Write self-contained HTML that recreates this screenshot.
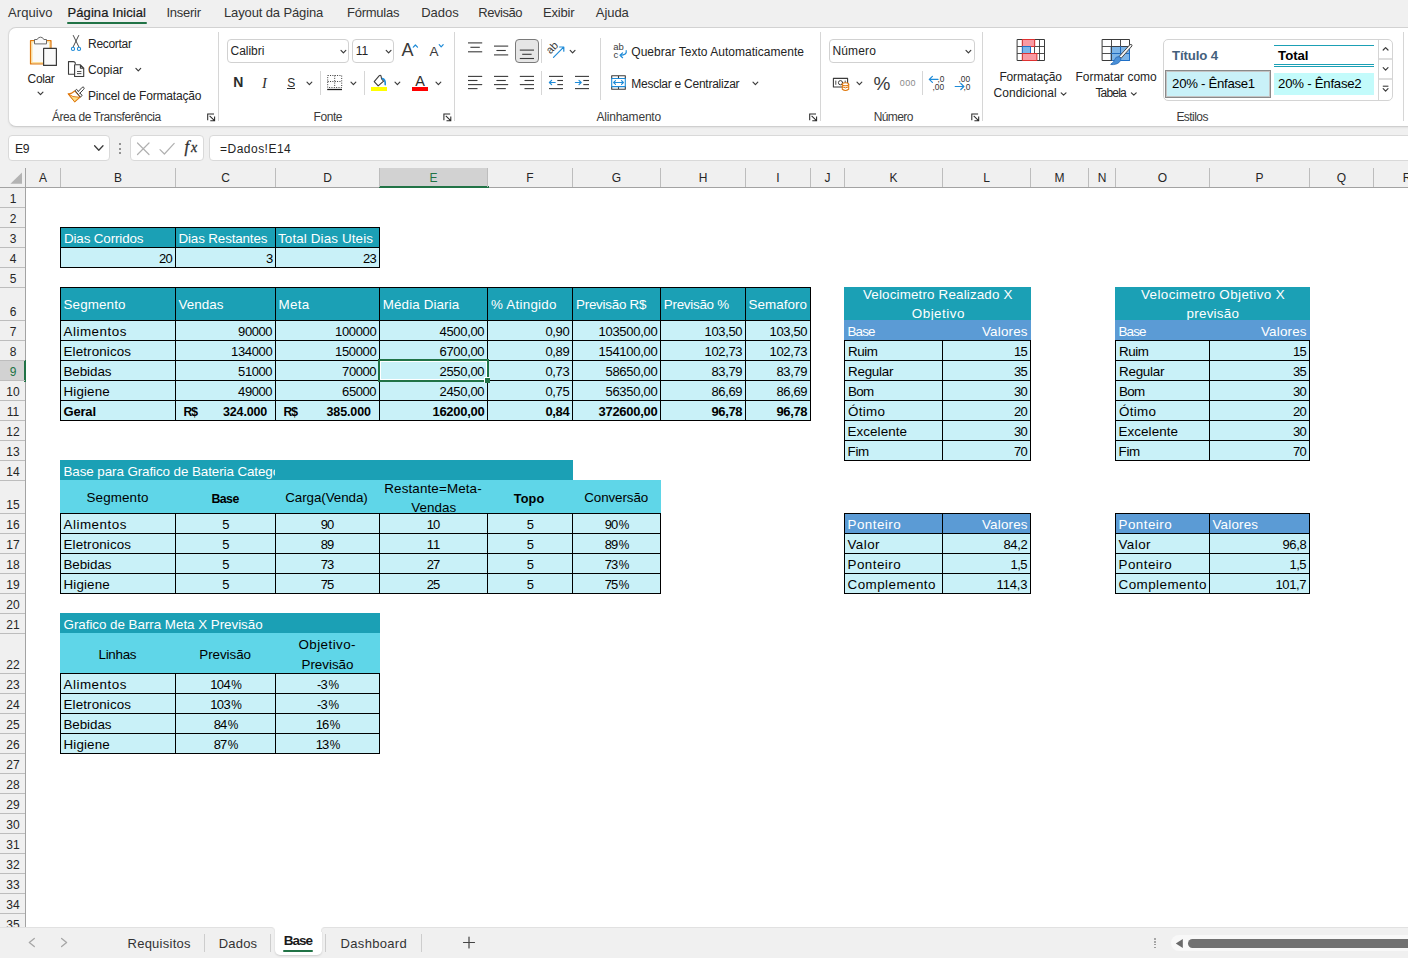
<!DOCTYPE html>
<html><head><meta charset="utf-8"><title>Excel</title><style>
html,body{margin:0;padding:0}
html{overflow:hidden;width:1408px;height:958px}
body{width:1408px;height:958px;overflow:hidden;position:relative;background:#f0f0f0;font-family:"Liberation Sans",sans-serif;color:#242424}
.t{position:absolute;white-space:nowrap;line-height:20px;height:20px}
.r{position:absolute}
svg{position:absolute;left:0;top:0;overflow:visible}
</style></head><body>
<div class="t" style="top:3.30px;font-size:13px;letter-spacing:0.072px;color:#333333;left:8.00px;">Arquivo</div>
<div class="t" style="top:3.30px;font-size:13px;letter-spacing:-0.273px;color:#333333;left:166.50px;">Inserir</div>
<div class="t" style="top:3.30px;font-size:13px;letter-spacing:-0.131px;color:#333333;left:224.00px;">Layout da Página</div>
<div class="t" style="top:3.30px;font-size:13px;letter-spacing:-0.244px;color:#333333;left:347.00px;">Fórmulas</div>
<div class="t" style="top:3.30px;font-size:13px;letter-spacing:0.008px;color:#333333;left:421.20px;">Dados</div>
<div class="t" style="top:3.30px;font-size:13px;letter-spacing:-0.449px;color:#333333;left:478.20px;">Revisão</div>
<div class="t" style="top:3.30px;font-size:13px;letter-spacing:-0.200px;color:#333333;left:543.00px;">Exibir</div>
<div class="t" style="top:3.30px;font-size:13px;letter-spacing:-0.070px;color:#333333;left:595.80px;">Ajuda</div>
<div class="t" style="top:3.30px;font-size:13px;letter-spacing:0.088px;color:#1a1a1a;left:67.50px;-webkit-text-stroke:0.22px #1a1a1a;">Página Inicial</div>
<div class="r" style="left:67px;top:22px;width:80px;height:2px;background:#217346;border-radius:1px;"></div>
<div class="r" style="left:8px;top:27px;width:1420px;height:98px;background:#ffffff;border:1px solid #dadada;border-top-color:#d2d2d2;border-bottom-color:#cfcfcf;border-radius:8px;box-shadow:0 1px 2px rgba(0,0,0,0.06)"></div>
<div class="r" style="left:218px;top:32px;width:1px;height:89px;background:#d6d6d6;"></div>
<div class="r" style="left:454px;top:32px;width:1px;height:89px;background:#d6d6d6;"></div>
<div class="r" style="left:820px;top:32px;width:1px;height:89px;background:#d6d6d6;"></div>
<div class="r" style="left:982px;top:32px;width:1px;height:89px;background:#d6d6d6;"></div>
<div class="r" style="left:1403px;top:32px;width:1px;height:89px;background:#d6d6d6;"></div>
<div class="r" style="left:320px;top:71px;width:1px;height:24px;background:#d6d6d6;"></div>
<div class="r" style="left:364px;top:71px;width:1px;height:24px;background:#d6d6d6;"></div>
<div class="r" style="left:541px;top:39px;width:1px;height:24px;background:#d6d6d6;"></div>
<div class="r" style="left:541px;top:71px;width:1px;height:24px;background:#d6d6d6;"></div>
<div class="r" style="left:600px;top:38px;width:1px;height:62px;background:#d6d6d6;"></div>
<div class="r" style="left:922px;top:71px;width:1px;height:24px;background:#d6d6d6;"></div>
<div class="t" style="top:107.44px;font-size:12px;letter-spacing:-0.445px;color:#3b3b3b;left:52.00px;">Área de Transferência</div>
<div class="t" style="top:107.44px;font-size:12px;letter-spacing:-0.415px;color:#3b3b3b;left:313.50px;">Fonte</div>
<div class="t" style="top:107.44px;font-size:12px;letter-spacing:-0.192px;color:#3b3b3b;left:596.40px;">Alinhamento</div>
<div class="t" style="top:107.44px;font-size:12px;letter-spacing:-0.592px;color:#3b3b3b;left:873.70px;">Número</div>
<div class="t" style="top:107.44px;font-size:12px;letter-spacing:-0.540px;color:#3b3b3b;left:1176.40px;">Estilos</div>
<div class="t" style="top:68.64px;font-size:12px;letter-spacing:-0.370px;left:27.60px;">Colar</div>
<div class="t" style="top:34.14px;font-size:12px;letter-spacing:-0.289px;left:88.00px;">Recortar</div>
<div class="t" style="top:60.44px;font-size:12px;letter-spacing:-0.068px;left:88.00px;">Copiar</div>
<div class="t" style="top:86.14px;font-size:12px;letter-spacing:-0.168px;left:88.00px;">Pincel de Formatação</div>
<div class="r" style="left:227px;top:39px;width:122px;height:24px;background:#ffffff;border:1px solid #d1d1d1;border-radius:4px;box-sizing:border-box;"></div>
<div class="r" style="left:352px;top:39px;width:42px;height:24px;background:#ffffff;border:1px solid #d1d1d1;border-radius:4px;box-sizing:border-box;"></div>
<div class="t" style="top:41.14px;font-size:12px;letter-spacing:-0.037px;left:230.60px;">Calibri</div>
<div class="t" style="top:41.14px;font-size:12px;letter-spacing:0.021px;left:355.80px;">11</div>
<div class="t" style="top:40.36px;font-size:18px;color:#3a3a3a;left:401.50px;">A</div>
<div class="t" style="top:41.92px;font-size:13.5px;color:#3a3a3a;left:429.50px;">A</div>
<div class="t" style="top:72.05px;font-size:14px;font-weight:bold;color:#2b2b2b;left:233.20px;">N</div>
<div class="t" style="top:72.58px;font-size:14.5px;font-style:italic;font-family:'Liberation Serif',serif;color:#2b2b2b;left:262.00px;">I</div>
<div class="t" style="top:72.94px;font-size:12px;color:#2b2b2b;left:287.20px;">S</div>
<div class="r" style="left:287px;top:88px;width:8px;height:1px;background:#2b2b2b;"></div>
<div class="t" style="top:71.18px;font-size:14.5px;color:#2b2b2b;left:415.30px;">A</div>
<div class="r" style="left:412px;top:87px;width:16px;height:4px;background:#ff0000;"></div>
<div class="r" style="left:371px;top:87px;width:16px;height:4px;background:#ffff00;"></div>
<div class="t" style="top:42.44px;font-size:12px;letter-spacing:0.029px;left:631.30px;">Quebrar Texto Automaticamente</div>
<div class="t" style="top:74.24px;font-size:12px;letter-spacing:-0.255px;left:631.30px;">Mesclar e Centralizar</div>
<div class="r" style="left:515px;top:39px;width:24px;height:24px;background:#e6e6e6;border:1px solid #7a7a7a;border-radius:4px;box-sizing:border-box;"></div>
<div class="r" style="left:829px;top:39px;width:146px;height:24px;background:#ffffff;border:1px solid #d1d1d1;border-radius:4px;box-sizing:border-box;"></div>
<div class="t" style="top:41.14px;font-size:12px;letter-spacing:0.168px;left:832.40px;">Número</div>
<div class="t" style="top:74.02px;font-size:19px;color:#3a3a3a;left:873.50px;">%</div>
<div class="t" style="top:73.28px;font-size:9px;letter-spacing:0.328px;color:#8a8a8a;left:899.80px;">000</div>
<div class="t" style="top:67.44px;font-size:12px;letter-spacing:-0.158px;left:999.40px;">Formatação</div>
<div class="t" style="top:83.24px;font-size:12px;letter-spacing:0.040px;left:993.50px;">Condicional</div>
<div class="t" style="top:67.44px;font-size:12px;left:1075.40px;">Formatar como</div>
<div class="t" style="top:83.24px;font-size:12px;letter-spacing:-0.800px;left:1095.40px;">Tabela</div>
<div class="r" style="left:1163px;top:39px;width:230px;height:62px;background:#ffffff;border:1px solid #d4d4d4;border-radius:5px;box-sizing:border-box;"></div>
<div class="r" style="left:1378px;top:40px;width:1px;height:60px;background:#d4d4d4;"></div>
<div class="r" style="left:1379px;top:58px;width:13px;height:2px;background:#dedede;"></div>
<div class="r" style="left:1379px;top:78px;width:13px;height:2px;background:#dedede;"></div>
<div class="t" style="top:45.73px;font-size:13.2px;letter-spacing:-0.104px;font-weight:bold;color:#44607c;left:1172.00px;">Título 4</div>
<div class="t" style="top:45.73px;font-size:13.2px;letter-spacing:-0.039px;font-weight:bold;color:#000;left:1278.10px;">Total</div>
<div class="r" style="left:1274px;top:45px;width:100px;height:1px;background:#1ba0b5;"></div>
<div class="r" style="left:1274px;top:64px;width:100px;height:1px;background:#1ba0b5;"></div>
<div class="r" style="left:1274px;top:66px;width:100px;height:1px;background:#1ba0b5;"></div>
<div class="r" style="left:1165px;top:70px;width:106px;height:28px;background:#c9f1f8;border:1px solid #8a8a8a;box-shadow:inset 0 0 0 1px #c4c4c4;box-sizing:border-box;"></div>
<div class="r" style="left:1274px;top:73px;width:100px;height:22px;background:#c3fbfb;"></div>
<div class="t" style="top:73.83px;font-size:13.2px;letter-spacing:-0.283px;color:#000;left:1172.10px;">20% - Ênfase1</div>
<div class="t" style="top:73.83px;font-size:13.2px;letter-spacing:-0.241px;color:#000;left:1278.10px;">20% - Ênfase2</div>
<div class="r" style="left:8px;top:135px;width:102px;height:26px;background:#ffffff;border:1px solid #d9d9d9;border-radius:4px;box-sizing:border-box;"></div>
<div class="r" style="left:130px;top:135px;width:74px;height:26px;background:#ffffff;border:1px solid #d9d9d9;border-radius:4px;box-sizing:border-box;"></div>
<div class="r" style="left:209px;top:135px;width:1230px;height:26px;background:#ffffff;border:1px solid #d9d9d9;border-radius:4px;box-sizing:border-box;"></div>
<div class="t" style="top:138.97px;font-size:12.2px;letter-spacing:-0.450px;left:15.10px;">E9</div>
<div class="t" style="top:139.04px;font-size:12px;letter-spacing:0.488px;left:220.00px;">=Dados!E14</div>
<div class="t" style="top:137.28px;font-size:16.5px;font-style:italic;font-family:'Liberation Serif',serif;color:#2e2e2e;left:184.60px;-webkit-text-stroke:0.3px #2e2e2e;">f</div>
<div class="t" style="top:138.35px;font-size:14px;font-style:italic;font-family:'Liberation Serif',serif;color:#2e2e2e;left:191.00px;-webkit-text-stroke:0.3px #2e2e2e;">x</div>
<div class="r" style="left:119px;top:143.4px;width:2px;height:2px;background:#757575;border-radius:1px;"></div>
<div class="r" style="left:119px;top:147.5px;width:2px;height:2px;background:#757575;border-radius:1px;"></div>
<div class="r" style="left:119px;top:151.6px;width:2px;height:2px;background:#757575;border-radius:1px;"></div>
<svg width="1408" height="168" viewBox="0 0 1408 168" fill="none" stroke-linecap="round" stroke-linejoin="round">
<rect x="30.6" y="40.6" width="20.3" height="23.3" fill="#fafafa" stroke="#e07a10" stroke-width="1.4"/>
<rect x="31.9" y="41.9" width="17.7" height="20.7" fill="none" stroke="#fbdf9a" stroke-width="1.2"/>
<path d="M34.5 43.5 V39.5 H37.2 A3.5 3.5 0 0 1 43.8 39.5 H46.5 V43.5 Z" fill="#fafafa" stroke="#6a6a6a" stroke-width="1"/>
<rect x="43.6" y="48.4" width="12.8" height="17" fill="#fafafa" stroke="#3b3b3b" stroke-width="1.2"/>
<path d="M38.05 92.15 L40.50 94.65 L42.95 92.15" stroke="#3b3b3b" stroke-width="1.2"/>
<path d="M73.3 35.5 L78.9 47 M78.7 35.5 L73.1 47" stroke="#4a4a4a" stroke-width="1"/>
<circle cx="73" cy="48.9" r="1.6" stroke="#1e8bd8" stroke-width="1.1"/><circle cx="79" cy="48.9" r="1.6" stroke="#1e8bd8" stroke-width="1.1"/>
<path d="M74 74.2 H68.5 V61.6 H73.2 Q75.3 61.6 75.3 63.6" stroke="#3b3b3b" stroke-width="1.1"/>
<path d="M74.6 64.8 H80.4 L83.7 68.1 V76.5 H74.6 Z M80.4 64.8 V68.1 H83.7" stroke="#3b3b3b" stroke-width="1.1" fill="#fafafa"/>
<path d="M77.00 71.50 H81.40" stroke="#3b3b3b" stroke-width="0.9" stroke-linecap="butt"/>
<path d="M77.00 73.60 H81.40" stroke="#3b3b3b" stroke-width="0.9" stroke-linecap="butt"/>
<path d="M135.90 68.40 L138.30 70.80 L140.70 68.40" stroke="#3b3b3b" stroke-width="1.2"/>
<path d="M68.3 94 Q72 93.6 74.7 91 L80.2 97 L74.9 101.6 Z" fill="#fdfdfd" stroke="#e07a10" stroke-width="1.1"/>
<path d="M68.3 94 Q72 97.5 79.5 97.3 L74.9 101.6 Z" fill="#fbe08a" stroke="#e07a10" stroke-width="1"/>
<path d="M75.4 90.4 L76.6 89.3 L82.2 95.5 L80.6 96.8 Z" fill="#fff" stroke="#3b3b3b" stroke-width="1"/>
<path d="M78.2 91.6 L82.2 87.3 Q83.3 86.6 84 87.6 Q84.5 88.6 83.6 89.4 L79.8 93.3" fill="#fff" stroke="#3b3b3b" stroke-width="1"/>
<path d="M207.7 120.2 V113.9 H214.0" stroke="#2a2a2a" stroke-width="1.05" stroke-linecap="butt" stroke-linejoin="miter"/>
<path d="M209.6 115.8 L214.5 120.6 M214.6 116.4 V120.7 H210.3" stroke="#2a2a2a" stroke-width="1.05" stroke-linecap="butt" stroke-linejoin="miter"/>
<path d="M341.00 50.40 L343.40 52.80 L345.80 50.40" stroke="#3b3b3b" stroke-width="1.2"/>
<path d="M386.20 50.40 L388.60 52.80 L391.00 50.40" stroke="#3b3b3b" stroke-width="1.2"/>
<path d="M413.3 47.2 L415.4 45 L417.5 47.2" stroke="#1e8bd8" stroke-width="1.2"/>
<path d="M439.2 44.6 L441.2 46.8 L443.2 44.6" stroke="#1e8bd8" stroke-width="1.2"/>
<path d="M307.00 82.20 L309.40 84.60 L311.80 82.20" stroke="#3b3b3b" stroke-width="1.2"/>
<path d="M351.00 82.20 L353.40 84.60 L355.80 82.20" stroke="#3b3b3b" stroke-width="1.2"/>
<path d="M395.00 82.20 L397.40 84.60 L399.80 82.20" stroke="#3b3b3b" stroke-width="1.2"/>
<path d="M436.00 82.20 L438.40 84.60 L440.80 82.20" stroke="#3b3b3b" stroke-width="1.2"/>
<path d="M327.7 75.5 H341.7 V87.5 H327.7 Z M334.7 75.5 V87.5 M327.7 81.5 H341.7" stroke="#3b3b3b" stroke-width="1" stroke-dasharray="1 1.35" stroke-linecap="butt"/>
<path d="M327.20 89.50 H342.00" stroke="#1a1a1a" stroke-width="1.3" stroke-linecap="butt"/>
<path d="M374.2 81.6 L379.3 75.7 Q380.2 74.8 381 75.8 L381.6 79 L383.6 81.2 L378.2 85.9 Z" fill="#fff" stroke="#3b3b3b" stroke-width="1.1"/>
<path d="M382.4 78.6 Q385.6 79.6 385.2 84.6" stroke="#1e8bd8" stroke-width="1.6"/>
<path d="M443.9 120.2 V113.9 H450.2" stroke="#2a2a2a" stroke-width="1.05" stroke-linecap="butt" stroke-linejoin="miter"/>
<path d="M445.8 115.8 L450.7 120.6 M450.8 116.4 V120.7 H446.5" stroke="#2a2a2a" stroke-width="1.05" stroke-linecap="butt" stroke-linejoin="miter"/>
<path d="M468.00 42.90 H482.20" stroke="#3b3b3b" stroke-width="1.1" stroke-linecap="butt"/>
<path d="M470.40 47.30 H479.80" stroke="#3b3b3b" stroke-width="1.1" stroke-linecap="butt"/>
<path d="M468.00 51.80 H482.20" stroke="#3b3b3b" stroke-width="1.1" stroke-linecap="butt"/>
<path d="M494.00 46.10 H508.20" stroke="#3b3b3b" stroke-width="1.1" stroke-linecap="butt"/>
<path d="M496.40 50.50 H505.80" stroke="#3b3b3b" stroke-width="1.1" stroke-linecap="butt"/>
<path d="M494.00 54.90 H508.20" stroke="#3b3b3b" stroke-width="1.1" stroke-linecap="butt"/>
<path d="M519.80 50.10 H534.00" stroke="#3b3b3b" stroke-width="1.1" stroke-linecap="butt"/>
<path d="M522.20 54.30 H531.60" stroke="#3b3b3b" stroke-width="1.1" stroke-linecap="butt"/>
<path d="M519.80 58.50 H534.00" stroke="#3b3b3b" stroke-width="1.1" stroke-linecap="butt"/>
<text x="0" y="0" transform="translate(550.6 54.6) rotate(-47)" font-family="Liberation Sans, sans-serif" font-size="10.8" fill="#3b3b3b" stroke="none">ab</text>
<path d="M553.5 57.3 L563.4 47.4 M559.6 47 H563.8 V51.2" stroke="#1e8bd8" stroke-width="1.2"/>
<path d="M570.20 50.40 L572.60 52.80 L575.00 50.40" stroke="#3b3b3b" stroke-width="1.2"/>
<path d="M468.00 76.40 H482.20" stroke="#3b3b3b" stroke-width="1.1" stroke-linecap="butt"/>
<path d="M468.00 80.50 H477.50" stroke="#3b3b3b" stroke-width="1.1" stroke-linecap="butt"/>
<path d="M468.00 84.60 H482.20" stroke="#3b3b3b" stroke-width="1.1" stroke-linecap="butt"/>
<path d="M468.00 88.60 H477.50" stroke="#3b3b3b" stroke-width="1.1" stroke-linecap="butt"/>
<path d="M494.00 76.40 H508.20" stroke="#3b3b3b" stroke-width="1.1" stroke-linecap="butt"/>
<path d="M496.40 80.50 H505.80" stroke="#3b3b3b" stroke-width="1.1" stroke-linecap="butt"/>
<path d="M494.00 84.60 H508.20" stroke="#3b3b3b" stroke-width="1.1" stroke-linecap="butt"/>
<path d="M496.40 88.60 H505.80" stroke="#3b3b3b" stroke-width="1.1" stroke-linecap="butt"/>
<path d="M519.80 76.40 H534.00" stroke="#3b3b3b" stroke-width="1.1" stroke-linecap="butt"/>
<path d="M524.50 80.50 H534.00" stroke="#3b3b3b" stroke-width="1.1" stroke-linecap="butt"/>
<path d="M519.80 84.60 H534.00" stroke="#3b3b3b" stroke-width="1.1" stroke-linecap="butt"/>
<path d="M524.50 88.60 H534.00" stroke="#3b3b3b" stroke-width="1.1" stroke-linecap="butt"/>
<path d="M549.00 76.40 H563.00" stroke="#3b3b3b" stroke-width="1.1" stroke-linecap="butt"/>
<path d="M549.00 88.60 H563.00" stroke="#3b3b3b" stroke-width="1.1" stroke-linecap="butt"/>
<path d="M557.30 80.50 H563.00" stroke="#3b3b3b" stroke-width="1.1" stroke-linecap="butt"/>
<path d="M557.30 84.60 H563.00" stroke="#3b3b3b" stroke-width="1.1" stroke-linecap="butt"/>
<path d="M555.2 82.5 H549.4 M551.6 80.3 L549.4 82.5 L551.6 84.7" stroke="#1e8bd8" stroke-width="1.2"/>
<path d="M575.00 76.40 H589.00" stroke="#3b3b3b" stroke-width="1.1" stroke-linecap="butt"/>
<path d="M575.00 88.60 H589.00" stroke="#3b3b3b" stroke-width="1.1" stroke-linecap="butt"/>
<path d="M583.30 80.50 H589.00" stroke="#3b3b3b" stroke-width="1.1" stroke-linecap="butt"/>
<path d="M583.30 84.60 H589.00" stroke="#3b3b3b" stroke-width="1.1" stroke-linecap="butt"/>
<path d="M575.4 82.5 H581.2 M579 80.3 L581.2 82.5 L579 84.7" stroke="#1e8bd8" stroke-width="1.2"/>
<text x="613.2" y="50.4" font-family="Liberation Sans, sans-serif" font-size="9.5" fill="#3b3b3b" stroke="none">ab</text>
<text x="613.4" y="58.2" font-family="Liberation Sans, sans-serif" font-size="9.5" fill="#3b3b3b" stroke="none">c</text>
<path d="M626.2 50.6 Q627.2 55 620.2 55.3 M622.6 52.9 L620 55.3 L622.6 57.7" stroke="#1e8bd8" stroke-width="1.2"/>
<path d="M611.7 78.5 V75.8 H625.3 V78.5 M611.7 86.6 V89.2 H625.3 V86.6 M618.5 75.8 V78.5 M618.5 86.6 V89.2" stroke="#3b3b3b" stroke-width="1.1"/>
<rect x="611.7" y="78.5" width="13.6" height="8.1" stroke="#1e8bd8" stroke-width="1.1"/>
<path d="M613.6 82.5 H623.4 M615.5 80.6 L613.6 82.5 L615.5 84.4 M621.5 80.6 L623.4 82.5 L621.5 84.4" stroke="#1e8bd8" stroke-width="1.1"/>
<path d="M753.00 82.20 L755.40 84.60 L757.80 82.20" stroke="#3b3b3b" stroke-width="1.2"/>
<path d="M809.7 120.2 V113.9 H816.0" stroke="#2a2a2a" stroke-width="1.05" stroke-linecap="butt" stroke-linejoin="miter"/>
<path d="M811.6 115.8 L816.5 120.6 M816.6 116.4 V120.7 H812.3" stroke="#2a2a2a" stroke-width="1.05" stroke-linecap="butt" stroke-linejoin="miter"/>
<path d="M966.00 50.40 L968.40 52.80 L970.80 50.40" stroke="#3b3b3b" stroke-width="1.2"/>
<rect x="833.4" y="78.4" width="14.2" height="8.6" stroke="#3b3b3b" stroke-width="1.1" fill="#fff"/>
<circle cx="840.5" cy="82.7" r="2.1" stroke="#3b3b3b" stroke-width="1"/>
<path d="M835.8 81 V84.4 M845.2 81 V84.4" stroke="#3b3b3b" stroke-width="0.9"/>
<path d="M842.3 84.3 V89.3 Q845.4 91.6 848.7 89.3 V84.3" fill="#fff" stroke="#e07a10" stroke-width="1.1"/>
<ellipse cx="845.5" cy="84.3" rx="3.2" ry="1.5" fill="#fff" stroke="#e07a10" stroke-width="1.1"/>
<path d="M842.3 86.9 Q845.4 89.1 848.7 86.9" stroke="#e07a10" stroke-width="1"/>
<path d="M857.00 82.20 L859.40 84.60 L861.80 82.20" stroke="#3b3b3b" stroke-width="1.2"/>
<path d="M929.3 79.4 H938 M932.4 76.4 L929.3 79.4 L932.4 82.4" stroke="#1e8bd8" stroke-width="1.2"/>
<text transform="translate(937.4 81.8) scale(0.93 1)" font-family="Liberation Sans, sans-serif" font-size="9" fill="#333" stroke="none">,0</text>
<text transform="translate(932.4 89.9) scale(0.93 1)" font-family="Liberation Sans, sans-serif" font-size="9" fill="#333" stroke="none">,00</text>
<text transform="translate(958.4 81.8) scale(0.93 1)" font-family="Liberation Sans, sans-serif" font-size="9" fill="#333" stroke="none">,00</text>
<path d="M955.2 86.5 H963.9 M960.8 83.5 L963.9 86.5 L960.8 89.5" stroke="#1e8bd8" stroke-width="1.2"/>
<text transform="translate(963.4 89.9) scale(0.93 1)" font-family="Liberation Sans, sans-serif" font-size="9" fill="#333" stroke="none">,0</text>
<path d="M971.8 120.2 V113.9 H978.1" stroke="#2a2a2a" stroke-width="1.05" stroke-linecap="butt" stroke-linejoin="miter"/>
<path d="M973.7 115.8 L978.6 120.6 M978.7 116.4 V120.7 H974.4" stroke="#2a2a2a" stroke-width="1.05" stroke-linecap="butt" stroke-linejoin="miter"/>
<rect x="1017.5" y="39.5" width="27" height="21" fill="#fff" stroke="#3b3b3b" stroke-width="1"/>
<path d="M1017.5 46.5 H1044.5 M1017.5 53.5 H1044.5 M1022.7 39.5 V60.5 M1034.5 39.5 V60.5 M1039.5 39.5 V60.5" stroke="#3b3b3b" stroke-width="0.9"/>
<rect x="1022.7" y="39.5" width="12" height="7" fill="#f99aa3" stroke="#e03131" stroke-width="1"/>
<rect x="1022.7" y="46.5" width="7.8" height="7" fill="#7db5e8" stroke="#1e6fc8" stroke-width="1"/>
<rect x="1022.7" y="53.5" width="14.2" height="7" fill="#f99aa3" stroke="#e03131" stroke-width="1"/>
<path d="M1061.20 92.80 L1063.60 95.20 L1066.00 92.80" stroke="#3b3b3b" stroke-width="1.2"/>
<rect x="1102.5" y="39.5" width="27" height="21" fill="#fff" stroke="#3b3b3b" stroke-width="1"/>
<rect x="1111.5" y="46.5" width="18" height="14" fill="#7db5e8" stroke="#1e6fc8" stroke-width="1"/>
<path d="M1102.5 46.5 H1129.5 M1102.5 53.5 H1129.5 M1111.5 39.5 V60.5 M1120.5 39.5 V60.5" stroke="#3b3b3b" stroke-width="0.9"/>
<path d="M1111.5 53.5 H1129.5 M1120.5 46.5 V60.5" stroke="#1e6fc8" stroke-width="0.9"/>
<path d="M1131.6 46.4 L1121.2 58.2 L1119.2 56.4 L1129.8 44.8 Q1131 44 1131.8 44.8 Q1132.4 45.6 1131.6 46.4 Z" fill="#f4f4f4" stroke="#4a4a4a" stroke-width="1"/>
<path d="M1119 56.6 L1121 58.4 Q1120.6 63.6 1113.6 64.6 Q1109.6 64.8 1110.8 64 Q1114.2 62.4 1114.6 59.6 Q1115.6 56.2 1119 56.6 Z" fill="#4a90d9" stroke="#2d6fb8" stroke-width="0.8"/>
<path d="M1131.40 92.80 L1133.80 95.20 L1136.20 92.80" stroke="#3b3b3b" stroke-width="1.2"/>
<path d="M1383.20 50.00 L1385.60 47.60 L1388.00 50.00" stroke="#3b3b3b" stroke-width="1.2"/>
<path d="M1383.20 67.70 L1385.60 70.10 L1388.00 67.70" stroke="#3b3b3b" stroke-width="1.2"/>
<path d="M1382.80 86.20 H1388.40" stroke="#3b3b3b" stroke-width="1.1" stroke-linecap="butt"/>
<path d="M1383.20 88.70 L1385.60 91.10 L1388.00 88.70" stroke="#3b3b3b" stroke-width="1.2"/>
<path d="M94.60 145.80 L98.80 150.20 L103.00 145.80" stroke="#3b3b3b" stroke-width="1.3"/>
<path d="M137.5 143 L149 154.5 M149 143 L137.5 154.5" stroke="#b0b0b0" stroke-width="1.2"/>
<path d="M160 149.6 L164.4 154 L174.2 143.4" stroke="#b0b0b0" stroke-width="1.2"/>
</svg>

<div class="r" style="left:0px;top:168px;width:1408px;height:759px;background:#ffffff;"></div>
<div class="r" style="left:0px;top:168px;width:1408px;height:19px;background:#f0f0f0;"></div>
<div class="r" style="left:0px;top:168px;width:25px;height:759px;background:#f0f0f0;"></div>
<div class="r" style="left:0px;top:187px;width:1408px;height:1px;background:#a3a3a3;"></div>
<div class="r" style="left:25px;top:168px;width:1px;height:759px;background:#a3a3a3;"></div>
<svg width="1408" height="958"><polygon points="22,172.4 22,183.8 10.4,183.8" fill="#b3b3b3"/></svg>
<div class="r" style="left:380px;top:168px;width:108px;height:19px;background:#d2d2d2;"></div>
<div class="r" style="left:379px;top:186px;width:110px;height:2px;background:#217346;"></div>
<div class="r" style="left:0px;top:361px;width:24px;height:20px;background:#d2d2d2;"></div>
<div class="r" style="left:24px;top:360px;width:2px;height:22px;background:#217346;"></div>
<div class="r" style="left:60px;top:168px;width:1px;height:19px;background:#bdbdbd;"></div>
<div class="t" style="top:168.14px;font-size:12px;color:#262626;left:-257.00px;width:600px;text-align:center;">A</div>
<div class="r" style="left:175px;top:168px;width:1px;height:19px;background:#bdbdbd;"></div>
<div class="t" style="top:168.14px;font-size:12px;color:#262626;left:-182.00px;width:600px;text-align:center;">B</div>
<div class="r" style="left:275px;top:168px;width:1px;height:19px;background:#bdbdbd;"></div>
<div class="t" style="top:168.14px;font-size:12px;color:#262626;left:-74.50px;width:600px;text-align:center;">C</div>
<div class="r" style="left:379px;top:168px;width:1px;height:19px;background:#bdbdbd;"></div>
<div class="t" style="top:168.14px;font-size:12px;color:#262626;left:27.50px;width:600px;text-align:center;">D</div>
<div class="r" style="left:487px;top:168px;width:1px;height:19px;background:#bdbdbd;"></div>
<div class="t" style="top:168.14px;font-size:12px;color:#217346;left:133.50px;width:600px;text-align:center;">E</div>
<div class="r" style="left:572px;top:168px;width:1px;height:19px;background:#bdbdbd;"></div>
<div class="t" style="top:168.14px;font-size:12px;color:#262626;left:230.00px;width:600px;text-align:center;">F</div>
<div class="r" style="left:660px;top:168px;width:1px;height:19px;background:#bdbdbd;"></div>
<div class="t" style="top:168.14px;font-size:12px;color:#262626;left:316.50px;width:600px;text-align:center;">G</div>
<div class="r" style="left:745px;top:168px;width:1px;height:19px;background:#bdbdbd;"></div>
<div class="t" style="top:168.14px;font-size:12px;color:#262626;left:403.00px;width:600px;text-align:center;">H</div>
<div class="r" style="left:810px;top:168px;width:1px;height:19px;background:#bdbdbd;"></div>
<div class="t" style="top:168.14px;font-size:12px;color:#262626;left:478.00px;width:600px;text-align:center;">I</div>
<div class="r" style="left:844px;top:168px;width:1px;height:19px;background:#bdbdbd;"></div>
<div class="t" style="top:168.14px;font-size:12px;color:#262626;left:527.50px;width:600px;text-align:center;">J</div>
<div class="r" style="left:942px;top:168px;width:1px;height:19px;background:#bdbdbd;"></div>
<div class="t" style="top:168.14px;font-size:12px;color:#262626;left:593.50px;width:600px;text-align:center;">K</div>
<div class="r" style="left:1030px;top:168px;width:1px;height:19px;background:#bdbdbd;"></div>
<div class="t" style="top:168.14px;font-size:12px;color:#262626;left:686.50px;width:600px;text-align:center;">L</div>
<div class="r" style="left:1088px;top:168px;width:1px;height:19px;background:#bdbdbd;"></div>
<div class="t" style="top:168.14px;font-size:12px;color:#262626;left:759.50px;width:600px;text-align:center;">M</div>
<div class="r" style="left:1115px;top:168px;width:1px;height:19px;background:#bdbdbd;"></div>
<div class="t" style="top:168.14px;font-size:12px;color:#262626;left:802.00px;width:600px;text-align:center;">N</div>
<div class="r" style="left:1209px;top:168px;width:1px;height:19px;background:#bdbdbd;"></div>
<div class="t" style="top:168.14px;font-size:12px;color:#262626;left:862.50px;width:600px;text-align:center;">O</div>
<div class="r" style="left:1309px;top:168px;width:1px;height:19px;background:#bdbdbd;"></div>
<div class="t" style="top:168.14px;font-size:12px;color:#262626;left:959.50px;width:600px;text-align:center;">P</div>
<div class="r" style="left:1373px;top:168px;width:1px;height:19px;background:#bdbdbd;"></div>
<div class="t" style="top:168.14px;font-size:12px;color:#262626;left:1041.50px;width:600px;text-align:center;">Q</div>
<div class="t" style="top:168.14px;font-size:12px;color:#262626;left:1107.00px;width:600px;text-align:center;">R</div>
<div class="r" style="left:0px;top:207px;width:25px;height:1px;background:#bdbdbd;"></div>
<div class="t" style="left:0;width:26px;text-align:center;top:189.44px;font-size:12px;color:#262626;height:20.00px;overflow:hidden">1</div>
<div class="r" style="left:0px;top:227px;width:25px;height:1px;background:#bdbdbd;"></div>
<div class="t" style="left:0;width:26px;text-align:center;top:209.44px;font-size:12px;color:#262626;height:20.00px;overflow:hidden">2</div>
<div class="r" style="left:0px;top:247px;width:25px;height:1px;background:#bdbdbd;"></div>
<div class="t" style="left:0;width:26px;text-align:center;top:229.44px;font-size:12px;color:#262626;height:20.00px;overflow:hidden">3</div>
<div class="r" style="left:0px;top:267px;width:25px;height:1px;background:#bdbdbd;"></div>
<div class="t" style="left:0;width:26px;text-align:center;top:249.44px;font-size:12px;color:#262626;height:20.00px;overflow:hidden">4</div>
<div class="r" style="left:0px;top:287px;width:25px;height:1px;background:#bdbdbd;"></div>
<div class="t" style="left:0;width:26px;text-align:center;top:269.44px;font-size:12px;color:#262626;height:20.00px;overflow:hidden">5</div>
<div class="r" style="left:0px;top:320px;width:25px;height:1px;background:#bdbdbd;"></div>
<div class="t" style="left:0;width:26px;text-align:center;top:302.44px;font-size:12px;color:#262626;height:20.00px;overflow:hidden">6</div>
<div class="r" style="left:0px;top:340px;width:25px;height:1px;background:#bdbdbd;"></div>
<div class="t" style="left:0;width:26px;text-align:center;top:322.44px;font-size:12px;color:#262626;height:20.00px;overflow:hidden">7</div>
<div class="r" style="left:0px;top:360px;width:25px;height:1px;background:#bdbdbd;"></div>
<div class="t" style="left:0;width:26px;text-align:center;top:342.44px;font-size:12px;color:#262626;height:20.00px;overflow:hidden">8</div>
<div class="r" style="left:0px;top:380px;width:25px;height:1px;background:#bdbdbd;"></div>
<div class="t" style="left:0;width:26px;text-align:center;top:362.44px;font-size:12px;color:#217346;height:20.00px;overflow:hidden">9</div>
<div class="r" style="left:0px;top:400px;width:25px;height:1px;background:#bdbdbd;"></div>
<div class="t" style="left:0;width:26px;text-align:center;top:382.44px;font-size:12px;color:#262626;height:20.00px;overflow:hidden">10</div>
<div class="r" style="left:0px;top:420px;width:25px;height:1px;background:#bdbdbd;"></div>
<div class="t" style="left:0;width:26px;text-align:center;top:402.44px;font-size:12px;color:#262626;height:20.00px;overflow:hidden">11</div>
<div class="r" style="left:0px;top:440px;width:25px;height:1px;background:#bdbdbd;"></div>
<div class="t" style="left:0;width:26px;text-align:center;top:422.44px;font-size:12px;color:#262626;height:20.00px;overflow:hidden">12</div>
<div class="r" style="left:0px;top:460px;width:25px;height:1px;background:#bdbdbd;"></div>
<div class="t" style="left:0;width:26px;text-align:center;top:442.44px;font-size:12px;color:#262626;height:20.00px;overflow:hidden">13</div>
<div class="r" style="left:0px;top:480px;width:25px;height:1px;background:#bdbdbd;"></div>
<div class="t" style="left:0;width:26px;text-align:center;top:462.44px;font-size:12px;color:#262626;height:20.00px;overflow:hidden">14</div>
<div class="r" style="left:0px;top:513px;width:25px;height:1px;background:#bdbdbd;"></div>
<div class="t" style="left:0;width:26px;text-align:center;top:495.44px;font-size:12px;color:#262626;height:20.00px;overflow:hidden">15</div>
<div class="r" style="left:0px;top:533px;width:25px;height:1px;background:#bdbdbd;"></div>
<div class="t" style="left:0;width:26px;text-align:center;top:515.44px;font-size:12px;color:#262626;height:20.00px;overflow:hidden">16</div>
<div class="r" style="left:0px;top:553px;width:25px;height:1px;background:#bdbdbd;"></div>
<div class="t" style="left:0;width:26px;text-align:center;top:535.44px;font-size:12px;color:#262626;height:20.00px;overflow:hidden">17</div>
<div class="r" style="left:0px;top:573px;width:25px;height:1px;background:#bdbdbd;"></div>
<div class="t" style="left:0;width:26px;text-align:center;top:555.44px;font-size:12px;color:#262626;height:20.00px;overflow:hidden">18</div>
<div class="r" style="left:0px;top:593px;width:25px;height:1px;background:#bdbdbd;"></div>
<div class="t" style="left:0;width:26px;text-align:center;top:575.44px;font-size:12px;color:#262626;height:20.00px;overflow:hidden">19</div>
<div class="r" style="left:0px;top:613px;width:25px;height:1px;background:#bdbdbd;"></div>
<div class="t" style="left:0;width:26px;text-align:center;top:595.44px;font-size:12px;color:#262626;height:20.00px;overflow:hidden">20</div>
<div class="r" style="left:0px;top:633px;width:25px;height:1px;background:#bdbdbd;"></div>
<div class="t" style="left:0;width:26px;text-align:center;top:615.44px;font-size:12px;color:#262626;height:20.00px;overflow:hidden">21</div>
<div class="r" style="left:0px;top:673px;width:25px;height:1px;background:#bdbdbd;"></div>
<div class="t" style="left:0;width:26px;text-align:center;top:655.44px;font-size:12px;color:#262626;height:20.00px;overflow:hidden">22</div>
<div class="r" style="left:0px;top:693px;width:25px;height:1px;background:#bdbdbd;"></div>
<div class="t" style="left:0;width:26px;text-align:center;top:675.44px;font-size:12px;color:#262626;height:20.00px;overflow:hidden">23</div>
<div class="r" style="left:0px;top:713px;width:25px;height:1px;background:#bdbdbd;"></div>
<div class="t" style="left:0;width:26px;text-align:center;top:695.44px;font-size:12px;color:#262626;height:20.00px;overflow:hidden">24</div>
<div class="r" style="left:0px;top:733px;width:25px;height:1px;background:#bdbdbd;"></div>
<div class="t" style="left:0;width:26px;text-align:center;top:715.44px;font-size:12px;color:#262626;height:20.00px;overflow:hidden">25</div>
<div class="r" style="left:0px;top:753px;width:25px;height:1px;background:#bdbdbd;"></div>
<div class="t" style="left:0;width:26px;text-align:center;top:735.44px;font-size:12px;color:#262626;height:20.00px;overflow:hidden">26</div>
<div class="r" style="left:0px;top:773px;width:25px;height:1px;background:#bdbdbd;"></div>
<div class="t" style="left:0;width:26px;text-align:center;top:755.44px;font-size:12px;color:#262626;height:20.00px;overflow:hidden">27</div>
<div class="r" style="left:0px;top:793px;width:25px;height:1px;background:#bdbdbd;"></div>
<div class="t" style="left:0;width:26px;text-align:center;top:775.44px;font-size:12px;color:#262626;height:20.00px;overflow:hidden">28</div>
<div class="r" style="left:0px;top:813px;width:25px;height:1px;background:#bdbdbd;"></div>
<div class="t" style="left:0;width:26px;text-align:center;top:795.44px;font-size:12px;color:#262626;height:20.00px;overflow:hidden">29</div>
<div class="r" style="left:0px;top:833px;width:25px;height:1px;background:#bdbdbd;"></div>
<div class="t" style="left:0;width:26px;text-align:center;top:815.44px;font-size:12px;color:#262626;height:20.00px;overflow:hidden">30</div>
<div class="r" style="left:0px;top:853px;width:25px;height:1px;background:#bdbdbd;"></div>
<div class="t" style="left:0;width:26px;text-align:center;top:835.44px;font-size:12px;color:#262626;height:20.00px;overflow:hidden">31</div>
<div class="r" style="left:0px;top:873px;width:25px;height:1px;background:#bdbdbd;"></div>
<div class="t" style="left:0;width:26px;text-align:center;top:855.44px;font-size:12px;color:#262626;height:20.00px;overflow:hidden">32</div>
<div class="r" style="left:0px;top:893px;width:25px;height:1px;background:#bdbdbd;"></div>
<div class="t" style="left:0;width:26px;text-align:center;top:875.44px;font-size:12px;color:#262626;height:20.00px;overflow:hidden">33</div>
<div class="r" style="left:0px;top:913px;width:25px;height:1px;background:#bdbdbd;"></div>
<div class="t" style="left:0;width:26px;text-align:center;top:895.44px;font-size:12px;color:#262626;height:20.00px;overflow:hidden">34</div>
<div class="t" style="left:0;width:26px;text-align:center;top:915.44px;font-size:12px;color:#262626;height:12.16px;overflow:hidden">35</div>
<div class="r" style="left:60px;top:227px;width:320px;height:21px;background:#1ba0b5;"></div>
<div class="r" style="left:60px;top:247px;width:320px;height:21px;background:#c9f1f8;"></div>
<div class="r" style="left:60px;top:227px;width:1px;height:41px;background:#000000;"></div>
<div class="r" style="left:175px;top:227px;width:1px;height:41px;background:#000000;"></div>
<div class="r" style="left:275px;top:227px;width:1px;height:41px;background:#000000;"></div>
<div class="r" style="left:379px;top:227px;width:1px;height:41px;background:#000000;"></div>
<div class="r" style="left:60px;top:227px;width:320px;height:1px;background:#000000;"></div>
<div class="r" style="left:60px;top:247px;width:320px;height:1px;background:#000000;"></div>
<div class="r" style="left:60px;top:267px;width:320px;height:1px;background:#000000;"></div>
<div class="t" style="top:228.96px;font-size:13.4px;letter-spacing:-0.136px;color:#ffffff;left:64.00px;">Dias Corridos</div>
<div class="t" style="top:228.96px;font-size:13.4px;letter-spacing:-0.142px;color:#ffffff;left:178.50px;">Dias Restantes</div>
<div class="t" style="top:228.96px;font-size:13.4px;letter-spacing:0.129px;color:#ffffff;left:278.00px;">Total Dias Uteis</div>
<div class="t" style="top:249.10px;font-size:13px;letter-spacing:-0.930px;color:#000;left:159.10px;">20</div>
<div class="t" style="top:249.10px;font-size:13px;color:#000;left:266.10px;">3</div>
<div class="t" style="top:249.10px;font-size:13px;letter-spacing:-0.930px;color:#000;left:363.10px;">23</div>
<div class="r" style="left:60px;top:287px;width:751px;height:34px;background:#1ba0b5;"></div>
<div class="r" style="left:60px;top:320px;width:751px;height:101px;background:#c9f1f8;"></div>
<div class="r" style="left:60px;top:287px;width:1px;height:134px;background:#000000;"></div>
<div class="r" style="left:175px;top:287px;width:1px;height:134px;background:#000000;"></div>
<div class="r" style="left:275px;top:287px;width:1px;height:134px;background:#000000;"></div>
<div class="r" style="left:379px;top:287px;width:1px;height:134px;background:#000000;"></div>
<div class="r" style="left:487px;top:287px;width:1px;height:134px;background:#000000;"></div>
<div class="r" style="left:572px;top:287px;width:1px;height:134px;background:#000000;"></div>
<div class="r" style="left:660px;top:287px;width:1px;height:134px;background:#000000;"></div>
<div class="r" style="left:745px;top:287px;width:1px;height:134px;background:#000000;"></div>
<div class="r" style="left:810px;top:287px;width:1px;height:134px;background:#000000;"></div>
<div class="r" style="left:60px;top:287px;width:751px;height:1px;background:#000000;"></div>
<div class="r" style="left:60px;top:320px;width:751px;height:1px;background:#000000;"></div>
<div class="r" style="left:60px;top:340px;width:751px;height:1px;background:#000000;"></div>
<div class="r" style="left:60px;top:360px;width:751px;height:1px;background:#000000;"></div>
<div class="r" style="left:60px;top:380px;width:751px;height:1px;background:#000000;"></div>
<div class="r" style="left:60px;top:400px;width:751px;height:1px;background:#000000;"></div>
<div class="r" style="left:60px;top:420px;width:751px;height:1px;background:#000000;"></div>
<div class="t" style="top:295.26px;font-size:13.4px;letter-spacing:0.128px;color:#ffffff;left:63.50px;">Segmento</div>
<div class="t" style="top:295.26px;font-size:13.4px;letter-spacing:0.062px;color:#ffffff;left:178.50px;">Vendas</div>
<div class="t" style="top:295.26px;font-size:13.4px;letter-spacing:0.312px;color:#ffffff;left:278.50px;">Meta</div>
<div class="t" style="top:295.26px;font-size:13.4px;letter-spacing:0.114px;color:#ffffff;left:382.75px;">Média Diaria</div>
<div class="t" style="top:295.26px;font-size:13.4px;letter-spacing:0.243px;color:#ffffff;left:491.00px;">% Atingido</div>
<div class="t" style="top:295.26px;font-size:13.4px;letter-spacing:-0.246px;color:#ffffff;left:576.00px;">Previsão R$</div>
<div class="t" style="top:295.26px;font-size:13.4px;letter-spacing:-0.256px;color:#ffffff;left:663.75px;">Previsão %</div>
<div class="t" style="top:295.26px;font-size:13.4px;letter-spacing:0.059px;color:#ffffff;left:748.50px;">Semaforo</div>
<div class="t" style="top:321.96px;font-size:13.4px;letter-spacing:0.522px;color:#000;left:63.50px;">Alimentos</div>
<div class="t" style="top:322.10px;font-size:13px;letter-spacing:-0.410px;color:#000;left:238.10px;">90000</div>
<div class="t" style="top:322.10px;font-size:13px;letter-spacing:-0.371px;color:#000;left:335.10px;">100000</div>
<div class="t" style="top:322.10px;font-size:13px;letter-spacing:-0.316px;color:#000;left:439.50px;">4500,00</div>
<div class="t" style="top:322.10px;font-size:13px;letter-spacing:-0.395px;color:#000;left:545.50px;">0,90</div>
<div class="t" style="top:322.10px;font-size:13px;letter-spacing:-0.291px;color:#000;left:598.50px;">103500,00</div>
<div class="t" style="top:322.10px;font-size:13px;letter-spacing:-0.336px;color:#000;left:704.50px;">103,50</div>
<div class="t" style="top:322.10px;font-size:13px;letter-spacing:-0.336px;color:#000;left:769.50px;">103,50</div>
<div class="t" style="top:341.96px;font-size:13.4px;letter-spacing:0.124px;color:#000;left:63.50px;">Eletronicos</div>
<div class="t" style="top:342.10px;font-size:13px;letter-spacing:-0.371px;color:#000;left:231.10px;">134000</div>
<div class="t" style="top:342.10px;font-size:13px;letter-spacing:-0.371px;color:#000;left:335.10px;">150000</div>
<div class="t" style="top:342.10px;font-size:13px;letter-spacing:-0.316px;color:#000;left:439.50px;">6700,00</div>
<div class="t" style="top:342.10px;font-size:13px;letter-spacing:-0.395px;color:#000;left:545.50px;">0,89</div>
<div class="t" style="top:342.10px;font-size:13px;letter-spacing:-0.291px;color:#000;left:598.50px;">154100,00</div>
<div class="t" style="top:342.10px;font-size:13px;letter-spacing:-0.336px;color:#000;left:704.50px;">102,73</div>
<div class="t" style="top:342.10px;font-size:13px;letter-spacing:-0.336px;color:#000;left:769.50px;">102,73</div>
<div class="t" style="top:361.96px;font-size:13.4px;letter-spacing:-0.074px;color:#000;left:63.50px;">Bebidas</div>
<div class="t" style="top:362.10px;font-size:13px;letter-spacing:-0.410px;color:#000;left:238.10px;">51000</div>
<div class="t" style="top:362.10px;font-size:13px;letter-spacing:-0.410px;color:#000;left:342.10px;">70000</div>
<div class="t" style="top:362.10px;font-size:13px;letter-spacing:-0.316px;color:#000;left:439.50px;">2550,00</div>
<div class="t" style="top:362.10px;font-size:13px;letter-spacing:-0.395px;color:#000;left:545.50px;">0,73</div>
<div class="t" style="top:362.10px;font-size:13px;letter-spacing:-0.301px;color:#000;left:605.50px;">58650,00</div>
<div class="t" style="top:362.10px;font-size:13px;letter-spacing:-0.366px;color:#000;left:711.50px;">83,79</div>
<div class="t" style="top:362.10px;font-size:13px;letter-spacing:-0.366px;color:#000;left:776.50px;">83,79</div>
<div class="t" style="top:381.96px;font-size:13.4px;letter-spacing:0.137px;color:#000;left:63.50px;">Higiene</div>
<div class="t" style="top:382.10px;font-size:13px;letter-spacing:-0.410px;color:#000;left:238.10px;">49000</div>
<div class="t" style="top:382.10px;font-size:13px;letter-spacing:-0.410px;color:#000;left:342.10px;">65000</div>
<div class="t" style="top:382.10px;font-size:13px;letter-spacing:-0.316px;color:#000;left:439.50px;">2450,00</div>
<div class="t" style="top:382.10px;font-size:13px;letter-spacing:-0.395px;color:#000;left:545.50px;">0,75</div>
<div class="t" style="top:382.10px;font-size:13px;letter-spacing:-0.301px;color:#000;left:605.50px;">56350,00</div>
<div class="t" style="top:382.10px;font-size:13px;letter-spacing:-0.366px;color:#000;left:711.50px;">86,69</div>
<div class="t" style="top:382.10px;font-size:13px;letter-spacing:-0.366px;color:#000;left:776.50px;">86,69</div>
<div class="t" style="top:402.10px;font-size:13px;letter-spacing:-0.179px;font-weight:bold;color:#000;left:63.50px;">Geral</div>
<div class="t" style="top:402.10px;font-size:13px;letter-spacing:-0.301px;font-weight:bold;color:#000;left:432.50px;">16200,00</div>
<div class="t" style="top:402.10px;font-size:13px;letter-spacing:-0.395px;font-weight:bold;color:#000;left:545.50px;">0,84</div>
<div class="t" style="top:402.10px;font-size:13px;letter-spacing:-0.291px;font-weight:bold;color:#000;left:598.50px;">372600,00</div>
<div class="t" style="top:402.10px;font-size:13px;letter-spacing:-0.366px;font-weight:bold;color:#000;left:711.50px;">96,78</div>
<div class="t" style="top:402.10px;font-size:13px;letter-spacing:-0.366px;font-weight:bold;color:#000;left:776.50px;">96,78</div>
<div class="t" style="top:402.37px;font-size:12.2px;letter-spacing:-1.116px;font-weight:bold;color:#000;left:183.50px;">R$</div>
<div class="t" style="top:402.27px;font-size:12.5px;letter-spacing:-0.156px;font-weight:bold;color:#000;left:223.00px;">324.000</div>
<div class="t" style="top:402.37px;font-size:12.2px;letter-spacing:-1.116px;font-weight:bold;color:#000;left:283.50px;">R$</div>
<div class="t" style="top:402.27px;font-size:12.5px;letter-spacing:-0.115px;font-weight:bold;color:#000;left:326.50px;">385.000</div>
<div class="r" style="left:60px;top:460px;width:513px;height:21px;background:#1ba0b5;"></div>
<div class="r" style="left:60px;top:480px;width:601px;height:34px;background:#5fd6e8;"></div>
<div class="r" style="left:60px;top:513px;width:601px;height:81px;background:#c9f1f8;"></div>
<div class="r" style="left:60px;top:513px;width:1px;height:81px;background:#000000;"></div>
<div class="r" style="left:175px;top:513px;width:1px;height:81px;background:#000000;"></div>
<div class="r" style="left:275px;top:513px;width:1px;height:81px;background:#000000;"></div>
<div class="r" style="left:379px;top:513px;width:1px;height:81px;background:#000000;"></div>
<div class="r" style="left:487px;top:513px;width:1px;height:81px;background:#000000;"></div>
<div class="r" style="left:572px;top:513px;width:1px;height:81px;background:#000000;"></div>
<div class="r" style="left:660px;top:513px;width:1px;height:81px;background:#000000;"></div>
<div class="r" style="left:60px;top:513px;width:601px;height:1px;background:#000000;"></div>
<div class="r" style="left:60px;top:533px;width:601px;height:1px;background:#000000;"></div>
<div class="r" style="left:60px;top:553px;width:601px;height:1px;background:#000000;"></div>
<div class="r" style="left:60px;top:573px;width:601px;height:1px;background:#000000;"></div>
<div class="r" style="left:60px;top:593px;width:601px;height:1px;background:#000000;"></div>
<div class="r" style="left:60px;top:460px;width:215px;height:20px;overflow:hidden">
<div class="t" style="top:1.96px;font-size:13.4px;letter-spacing:-0.086px;color:#ffffff;left:3.50px;">Base para Grafico de Bateria Categoria</div>
</div>
<div class="t" style="top:488.26px;font-size:13.4px;letter-spacing:0.128px;color:#000;left:86.50px;">Segmento</div>
<div class="t" style="top:488.64px;font-size:12.3px;letter-spacing:-0.549px;font-weight:bold;color:#000;left:211.50px;">Base</div>
<div class="t" style="top:488.26px;font-size:13.4px;letter-spacing:-0.083px;color:#000;left:285.25px;">Carga(Venda)</div>
<div class="t" style="top:488.50px;font-size:12.7px;letter-spacing:0.134px;font-weight:bold;color:#000;left:513.75px;">Topo</div>
<div class="t" style="top:488.26px;font-size:13.4px;letter-spacing:-0.099px;color:#000;left:584.25px;">Conversão</div>
<div class="r" style="left:380px;top:480px;width:107px;height:33px;overflow:hidden">
<div class="t" style="top:-1.04px;font-size:13.4px;letter-spacing:0.135px;color:#000;left:4.25px;">Restante=Meta-</div>
<div class="t" style="top:18.46px;font-size:13.4px;letter-spacing:0.062px;color:#000;left:31.25px;">Vendas</div>
</div>
<div class="t" style="top:514.96px;font-size:13.4px;letter-spacing:0.522px;color:#000;left:63.50px;">Alimentos</div>
<div class="t" style="top:515.10px;font-size:13px;color:#000;left:222.25px;">5</div>
<div class="t" style="top:515.10px;font-size:13px;letter-spacing:-0.930px;color:#000;left:320.75px;">90</div>
<div class="t" style="top:515.10px;font-size:13px;letter-spacing:-0.930px;color:#000;left:426.75px;">10</div>
<div class="t" style="top:515.10px;font-size:13px;color:#000;left:526.75px;">5</div>
<div class="t" style="top:515.10px;font-size:13px;letter-spacing:-0.930px;color:#000;left:604.65px;">90</div>
<div class="t" style="top:515.48px;font-size:11.9px;color:#000;left:618.85px;">%</div>
<div class="t" style="top:534.96px;font-size:13.4px;letter-spacing:0.124px;color:#000;left:63.50px;">Eletronicos</div>
<div class="t" style="top:535.10px;font-size:13px;color:#000;left:222.25px;">5</div>
<div class="t" style="top:535.10px;font-size:13px;letter-spacing:-0.930px;color:#000;left:320.75px;">89</div>
<div class="t" style="top:535.10px;font-size:13px;letter-spacing:-0.020px;color:#000;left:426.75px;">11</div>
<div class="t" style="top:535.10px;font-size:13px;color:#000;left:526.75px;">5</div>
<div class="t" style="top:535.10px;font-size:13px;letter-spacing:-0.930px;color:#000;left:604.65px;">89</div>
<div class="t" style="top:535.48px;font-size:11.9px;color:#000;left:618.85px;">%</div>
<div class="t" style="top:554.96px;font-size:13.4px;letter-spacing:-0.074px;color:#000;left:63.50px;">Bebidas</div>
<div class="t" style="top:555.10px;font-size:13px;color:#000;left:222.25px;">5</div>
<div class="t" style="top:555.10px;font-size:13px;letter-spacing:-0.930px;color:#000;left:320.75px;">73</div>
<div class="t" style="top:555.10px;font-size:13px;letter-spacing:-0.930px;color:#000;left:426.75px;">27</div>
<div class="t" style="top:555.10px;font-size:13px;color:#000;left:526.75px;">5</div>
<div class="t" style="top:555.10px;font-size:13px;letter-spacing:-0.930px;color:#000;left:604.65px;">73</div>
<div class="t" style="top:555.48px;font-size:11.9px;color:#000;left:618.85px;">%</div>
<div class="t" style="top:574.96px;font-size:13.4px;letter-spacing:0.137px;color:#000;left:63.50px;">Higiene</div>
<div class="t" style="top:575.10px;font-size:13px;color:#000;left:222.25px;">5</div>
<div class="t" style="top:575.10px;font-size:13px;letter-spacing:-0.930px;color:#000;left:320.75px;">75</div>
<div class="t" style="top:575.10px;font-size:13px;letter-spacing:-0.930px;color:#000;left:426.75px;">25</div>
<div class="t" style="top:575.10px;font-size:13px;color:#000;left:526.75px;">5</div>
<div class="t" style="top:575.10px;font-size:13px;letter-spacing:-0.930px;color:#000;left:604.65px;">75</div>
<div class="t" style="top:575.48px;font-size:11.9px;color:#000;left:618.85px;">%</div>
<div class="r" style="left:60px;top:613px;width:320px;height:21px;background:#1ba0b5;"></div>
<div class="r" style="left:60px;top:633px;width:320px;height:41px;background:#5fd6e8;"></div>
<div class="r" style="left:60px;top:673px;width:320px;height:81px;background:#c9f1f8;"></div>
<div class="r" style="left:60px;top:673px;width:1px;height:81px;background:#000000;"></div>
<div class="r" style="left:175px;top:673px;width:1px;height:81px;background:#000000;"></div>
<div class="r" style="left:275px;top:673px;width:1px;height:81px;background:#000000;"></div>
<div class="r" style="left:379px;top:673px;width:1px;height:81px;background:#000000;"></div>
<div class="r" style="left:60px;top:673px;width:320px;height:1px;background:#000000;"></div>
<div class="r" style="left:60px;top:693px;width:320px;height:1px;background:#000000;"></div>
<div class="r" style="left:60px;top:713px;width:320px;height:1px;background:#000000;"></div>
<div class="r" style="left:60px;top:733px;width:320px;height:1px;background:#000000;"></div>
<div class="r" style="left:60px;top:753px;width:320px;height:1px;background:#000000;"></div>
<div class="t" style="top:614.96px;font-size:13.4px;letter-spacing:-0.035px;color:#ffffff;left:63.50px;">Grafico de Barra Meta X Previsão</div>
<div class="t" style="top:644.76px;font-size:13.4px;letter-spacing:-0.293px;color:#000;left:98.50px;">Linhas</div>
<div class="t" style="top:644.76px;font-size:13.4px;letter-spacing:-0.054px;color:#000;left:199.25px;">Previsão</div>
<div class="t" style="top:634.96px;font-size:13.4px;letter-spacing:0.425px;color:#000;left:298.50px;">Objetivo-</div>
<div class="t" style="top:654.96px;font-size:13.4px;letter-spacing:-0.018px;color:#000;left:301.50px;">Previsão</div>
<div class="t" style="top:674.96px;font-size:13.4px;letter-spacing:0.522px;color:#000;left:63.50px;">Alimentos</div>
<div class="t" style="top:675.10px;font-size:13px;letter-spacing:-0.605px;color:#000;left:210.15px;">104</div>
<div class="t" style="top:675.48px;font-size:11.9px;color:#000;left:231.35px;">%</div>
<div class="t" style="top:675.10px;font-size:13px;letter-spacing:-0.670px;color:#000;left:316.95px;">-3</div>
<div class="t" style="top:675.48px;font-size:11.9px;color:#000;left:328.55px;">%</div>
<div class="t" style="top:694.96px;font-size:13.4px;letter-spacing:0.124px;color:#000;left:63.50px;">Eletronicos</div>
<div class="t" style="top:695.10px;font-size:13px;letter-spacing:-0.605px;color:#000;left:210.15px;">103</div>
<div class="t" style="top:695.48px;font-size:11.9px;color:#000;left:231.35px;">%</div>
<div class="t" style="top:695.10px;font-size:13px;letter-spacing:-0.670px;color:#000;left:316.95px;">-3</div>
<div class="t" style="top:695.48px;font-size:11.9px;color:#000;left:328.55px;">%</div>
<div class="t" style="top:714.96px;font-size:13.4px;letter-spacing:-0.074px;color:#000;left:63.50px;">Bebidas</div>
<div class="t" style="top:715.10px;font-size:13px;letter-spacing:-0.930px;color:#000;left:213.65px;">84</div>
<div class="t" style="top:715.48px;font-size:11.9px;color:#000;left:227.85px;">%</div>
<div class="t" style="top:715.10px;font-size:13px;letter-spacing:-0.930px;color:#000;left:315.65px;">16</div>
<div class="t" style="top:715.48px;font-size:11.9px;color:#000;left:329.85px;">%</div>
<div class="t" style="top:734.96px;font-size:13.4px;letter-spacing:0.137px;color:#000;left:63.50px;">Higiene</div>
<div class="t" style="top:735.10px;font-size:13px;letter-spacing:-0.930px;color:#000;left:213.65px;">87</div>
<div class="t" style="top:735.48px;font-size:11.9px;color:#000;left:227.85px;">%</div>
<div class="t" style="top:735.10px;font-size:13px;letter-spacing:-0.930px;color:#000;left:315.65px;">13</div>
<div class="t" style="top:735.48px;font-size:11.9px;color:#000;left:329.85px;">%</div>
<div class="r" style="left:844px;top:287px;width:187px;height:34px;background:#1ba0b5;"></div>
<div class="r" style="left:844px;top:320px;width:187px;height:21px;background:#5b9bd5;"></div>
<div class="r" style="left:844px;top:340px;width:187px;height:121px;background:#c9f1f8;"></div>
<div class="r" style="left:844px;top:340px;width:1px;height:121px;background:#000000;"></div>
<div class="r" style="left:942px;top:340px;width:1px;height:121px;background:#000000;"></div>
<div class="r" style="left:1030px;top:340px;width:1px;height:121px;background:#000000;"></div>
<div class="r" style="left:844px;top:340px;width:187px;height:1px;background:#000000;"></div>
<div class="r" style="left:844px;top:360px;width:187px;height:1px;background:#000000;"></div>
<div class="r" style="left:844px;top:380px;width:187px;height:1px;background:#000000;"></div>
<div class="r" style="left:844px;top:400px;width:187px;height:1px;background:#000000;"></div>
<div class="r" style="left:844px;top:420px;width:187px;height:1px;background:#000000;"></div>
<div class="r" style="left:844px;top:440px;width:187px;height:1px;background:#000000;"></div>
<div class="r" style="left:844px;top:460px;width:187px;height:1px;background:#000000;"></div>
<div class="r" style="left:844px;top:287px;width:187px;height:33px;overflow:hidden">
<div class="t" style="top:-2.34px;font-size:13.4px;letter-spacing:0.159px;color:#ffffff;left:19.00px;">Velocimetro Realizado X</div>
<div class="t" style="top:16.96px;font-size:13.4px;letter-spacing:0.510px;color:#ffffff;left:67.75px;">Objetivo</div>
</div>
<div class="t" style="top:321.96px;font-size:13.4px;letter-spacing:-0.851px;color:#ffffff;left:847.50px;">Base</div>
<div class="t" style="top:321.96px;font-size:13.4px;letter-spacing:0.180px;color:#ffffff;left:982.00px;">Valores</div>
<div class="t" style="top:341.96px;font-size:13.4px;letter-spacing:-0.430px;color:#000;left:848.00px;">Ruim</div>
<div class="t" style="top:342.10px;font-size:13px;letter-spacing:-0.930px;color:#000;left:1014.10px;">15</div>
<div class="t" style="top:361.96px;font-size:13.4px;letter-spacing:-0.233px;color:#000;left:848.00px;">Regular</div>
<div class="t" style="top:362.10px;font-size:13px;letter-spacing:-0.930px;color:#000;left:1014.10px;">35</div>
<div class="t" style="top:381.96px;font-size:13.4px;letter-spacing:-0.644px;color:#000;left:848.00px;">Bom</div>
<div class="t" style="top:382.10px;font-size:13px;letter-spacing:-0.930px;color:#000;left:1014.10px;">30</div>
<div class="t" style="top:401.96px;font-size:13.4px;letter-spacing:0.322px;color:#000;left:848.00px;">Ótimo</div>
<div class="t" style="top:402.10px;font-size:13px;letter-spacing:-0.930px;color:#000;left:1014.10px;">20</div>
<div class="t" style="top:421.96px;font-size:13.4px;letter-spacing:0.084px;color:#000;left:847.50px;">Excelente</div>
<div class="t" style="top:422.10px;font-size:13px;letter-spacing:-0.930px;color:#000;left:1014.10px;">30</div>
<div class="t" style="top:441.96px;font-size:13.4px;letter-spacing:-0.280px;color:#000;left:847.50px;">Fim</div>
<div class="t" style="top:442.10px;font-size:13px;letter-spacing:-0.930px;color:#000;left:1014.10px;">70</div>
<div class="r" style="left:1115px;top:287px;width:195px;height:34px;background:#1ba0b5;"></div>
<div class="r" style="left:1115px;top:320px;width:195px;height:21px;background:#5b9bd5;"></div>
<div class="r" style="left:1115px;top:340px;width:195px;height:121px;background:#c9f1f8;"></div>
<div class="r" style="left:1115px;top:340px;width:1px;height:121px;background:#000000;"></div>
<div class="r" style="left:1209px;top:340px;width:1px;height:121px;background:#000000;"></div>
<div class="r" style="left:1309px;top:340px;width:1px;height:121px;background:#000000;"></div>
<div class="r" style="left:1115px;top:340px;width:195px;height:1px;background:#000000;"></div>
<div class="r" style="left:1115px;top:360px;width:195px;height:1px;background:#000000;"></div>
<div class="r" style="left:1115px;top:380px;width:195px;height:1px;background:#000000;"></div>
<div class="r" style="left:1115px;top:400px;width:195px;height:1px;background:#000000;"></div>
<div class="r" style="left:1115px;top:420px;width:195px;height:1px;background:#000000;"></div>
<div class="r" style="left:1115px;top:440px;width:195px;height:1px;background:#000000;"></div>
<div class="r" style="left:1115px;top:460px;width:195px;height:1px;background:#000000;"></div>
<div class="r" style="left:1115px;top:287px;width:195px;height:33px;overflow:hidden">
<div class="t" style="top:-2.34px;font-size:13.4px;letter-spacing:0.391px;color:#ffffff;left:26.00px;">Velocimetro Objetivo X</div>
<div class="t" style="top:16.96px;font-size:13.4px;letter-spacing:0.264px;color:#ffffff;left:71.50px;">previsão</div>
</div>
<div class="t" style="top:321.96px;font-size:13.4px;letter-spacing:-0.851px;color:#ffffff;left:1118.50px;">Base</div>
<div class="t" style="top:321.96px;font-size:13.4px;letter-spacing:0.180px;color:#ffffff;left:1261.00px;">Valores</div>
<div class="t" style="top:341.96px;font-size:13.4px;letter-spacing:-0.430px;color:#000;left:1119.00px;">Ruim</div>
<div class="t" style="top:342.10px;font-size:13px;letter-spacing:-0.930px;color:#000;left:1293.10px;">15</div>
<div class="t" style="top:361.96px;font-size:13.4px;letter-spacing:-0.233px;color:#000;left:1119.00px;">Regular</div>
<div class="t" style="top:362.10px;font-size:13px;letter-spacing:-0.930px;color:#000;left:1293.10px;">35</div>
<div class="t" style="top:381.96px;font-size:13.4px;letter-spacing:-0.644px;color:#000;left:1119.00px;">Bom</div>
<div class="t" style="top:382.10px;font-size:13px;letter-spacing:-0.930px;color:#000;left:1293.10px;">30</div>
<div class="t" style="top:401.96px;font-size:13.4px;letter-spacing:0.322px;color:#000;left:1119.00px;">Ótimo</div>
<div class="t" style="top:402.10px;font-size:13px;letter-spacing:-0.930px;color:#000;left:1293.10px;">20</div>
<div class="t" style="top:421.96px;font-size:13.4px;letter-spacing:0.084px;color:#000;left:1118.50px;">Excelente</div>
<div class="t" style="top:422.10px;font-size:13px;letter-spacing:-0.930px;color:#000;left:1293.10px;">30</div>
<div class="t" style="top:441.96px;font-size:13.4px;letter-spacing:-0.280px;color:#000;left:1118.50px;">Fim</div>
<div class="t" style="top:442.10px;font-size:13px;letter-spacing:-0.930px;color:#000;left:1293.10px;">70</div>
<div class="r" style="left:844px;top:513px;width:187px;height:21px;background:#5b9bd5;"></div>
<div class="r" style="left:844px;top:533px;width:187px;height:61px;background:#c9f1f8;"></div>
<div class="r" style="left:844px;top:513px;width:1px;height:81px;background:#000000;"></div>
<div class="r" style="left:942px;top:513px;width:1px;height:81px;background:#000000;"></div>
<div class="r" style="left:1030px;top:513px;width:1px;height:81px;background:#000000;"></div>
<div class="r" style="left:844px;top:513px;width:187px;height:1px;background:#000000;"></div>
<div class="r" style="left:844px;top:533px;width:187px;height:1px;background:#000000;"></div>
<div class="r" style="left:844px;top:553px;width:187px;height:1px;background:#000000;"></div>
<div class="r" style="left:844px;top:573px;width:187px;height:1px;background:#000000;"></div>
<div class="r" style="left:844px;top:593px;width:187px;height:1px;background:#000000;"></div>
<div class="t" style="top:514.96px;font-size:13.4px;letter-spacing:0.476px;color:#ffffff;left:847.50px;">Ponteiro</div>
<div class="t" style="top:514.96px;font-size:13.4px;letter-spacing:0.180px;color:#ffffff;left:982.00px;">Valores</div>
<div class="t" style="top:534.96px;font-size:13.4px;letter-spacing:0.429px;color:#000;left:847.50px;">Valor</div>
<div class="t" style="top:535.10px;font-size:13px;letter-spacing:-0.395px;color:#000;left:1003.50px;">84,2</div>
<div class="t" style="top:554.96px;font-size:13.4px;letter-spacing:0.476px;color:#000;left:847.50px;">Ponteiro</div>
<div class="t" style="top:555.10px;font-size:13px;letter-spacing:-0.485px;color:#000;left:1010.50px;">1,5</div>
<div class="t" style="top:574.96px;font-size:13.4px;letter-spacing:0.458px;color:#000;left:847.50px;">Complemento</div>
<div class="t" style="top:575.10px;font-size:13px;letter-spacing:-0.122px;color:#000;left:996.50px;">114,3</div>
<div class="r" style="left:1115px;top:513px;width:195px;height:21px;background:#5b9bd5;"></div>
<div class="r" style="left:1115px;top:533px;width:195px;height:61px;background:#c9f1f8;"></div>
<div class="r" style="left:1115px;top:513px;width:1px;height:81px;background:#000000;"></div>
<div class="r" style="left:1209px;top:513px;width:1px;height:81px;background:#000000;"></div>
<div class="r" style="left:1309px;top:513px;width:1px;height:81px;background:#000000;"></div>
<div class="r" style="left:1115px;top:513px;width:195px;height:1px;background:#000000;"></div>
<div class="r" style="left:1115px;top:533px;width:195px;height:1px;background:#000000;"></div>
<div class="r" style="left:1115px;top:553px;width:195px;height:1px;background:#000000;"></div>
<div class="r" style="left:1115px;top:573px;width:195px;height:1px;background:#000000;"></div>
<div class="r" style="left:1115px;top:593px;width:195px;height:1px;background:#000000;"></div>
<div class="t" style="top:514.96px;font-size:13.4px;letter-spacing:0.476px;color:#ffffff;left:1118.50px;">Ponteiro</div>
<div class="t" style="top:514.96px;font-size:13.4px;letter-spacing:0.180px;color:#ffffff;left:1212.50px;">Valores</div>
<div class="t" style="top:534.96px;font-size:13.4px;letter-spacing:0.429px;color:#000;left:1118.50px;">Valor</div>
<div class="t" style="top:535.10px;font-size:13px;letter-spacing:-0.395px;color:#000;left:1282.50px;">96,8</div>
<div class="t" style="top:554.96px;font-size:13.4px;letter-spacing:0.476px;color:#000;left:1118.50px;">Ponteiro</div>
<div class="t" style="top:555.10px;font-size:13px;letter-spacing:-0.485px;color:#000;left:1289.50px;">1,5</div>
<div class="t" style="top:574.96px;font-size:13.4px;letter-spacing:0.458px;color:#000;left:1118.50px;">Complemento</div>
<div class="t" style="top:575.10px;font-size:13px;letter-spacing:-0.366px;color:#000;left:1275.50px;">101,7</div>
<div class="r" style="left:378px;top:359px;width:107px;height:19px;border:2px solid #217346;box-shadow:inset 0 0 0 1px #fff"></div>
<div class="r" style="left:484px;top:377px;width:6px;height:6px;background:#ffffff;"></div>
<div class="r" style="left:485px;top:378px;width:5px;height:5px;background:#217346;"></div>
<div class="r" style="left:0px;top:927px;width:1408px;height:31px;background:#f0f0f0;"></div>
<div class="r" style="left:0px;top:927px;width:1408px;height:1px;background:#e1e1e1;"></div>
<div class="r" style="left:274.5px;top:927px;width:47px;height:28.3px;background:#ffffff;border-radius:0 0 5px 5px;box-shadow:0 1px 2px rgba(0,0,0,0.14);"></div>
<div class="r" style="left:274.5px;top:926px;width:47px;height:2px;background:#ffffff;"></div>
<div class="r" style="left:270px;top:927px;width:5px;height:5px;background:#ffffff;"></div>
<div class="r" style="left:270px;top:927px;width:5px;height:5px;background:#f0f0f0;border-top-right-radius:4px;border-top:1px solid #e1e1e1;border-right:1px solid #e6e6e6;box-sizing:border-box;"></div>
<div class="r" style="left:321px;top:927px;width:5px;height:5px;background:#ffffff;"></div>
<div class="r" style="left:321px;top:927px;width:5px;height:5px;background:#f0f0f0;border-top-left-radius:4px;border-top:1px solid #e1e1e1;border-left:1px solid #e6e6e6;box-sizing:border-box;"></div>
<div class="t" style="top:934.30px;font-size:13px;letter-spacing:0.254px;color:#333;left:127.50px;">Requisitos</div>
<div class="t" style="top:934.30px;font-size:13px;letter-spacing:0.195px;color:#333;left:218.75px;">Dados</div>
<div class="t" style="top:930.82px;font-size:13.5px;letter-spacing:-1.022px;font-weight:bold;color:#1a1a1a;left:283.80px;">Base</div>
<div class="r" style="left:283px;top:950px;width:30px;height:2px;background:#217346;border-radius:1px;"></div>
<div class="t" style="top:934.30px;font-size:13px;letter-spacing:0.316px;color:#333;left:340.60px;">Dashboard</div>
<div class="r" style="left:204px;top:934px;width:1px;height:18px;background:#cdcdcd;"></div>
<div class="r" style="left:270px;top:934px;width:1px;height:18px;background:#cdcdcd;"></div>
<div class="r" style="left:325px;top:934px;width:1px;height:18px;background:#cdcdcd;"></div>
<div class="r" style="left:421px;top:934px;width:1px;height:18px;background:#cdcdcd;"></div>
<svg width="1408" height="958" fill="none" stroke="#a6a6a6" stroke-width="1.3" stroke-linecap="round" stroke-linejoin="round">
<path d="M34.3 938.5 L29.3 942.5 L34.3 946.5"/><path d="M61.6 938.5 L66.6 942.5 L61.6 946.5"/>
<path d="M463.5 942.5 H474.5 M469 937 V948" stroke="#444" stroke-width="1.2"/>
</svg>
<div class="r" style="left:1154px;top:938.0999999999999px;width:1.5px;height:1.5px;background:#8f8f8f;border-radius:1px;"></div>
<div class="r" style="left:1154px;top:941.0px;width:1.5px;height:1.5px;background:#8f8f8f;border-radius:1px;"></div>
<div class="r" style="left:1154px;top:943.9px;width:1.5px;height:1.5px;background:#8f8f8f;border-radius:1px;"></div>
<div class="r" style="left:1154px;top:946.6999999999999px;width:1.5px;height:1.5px;background:#8f8f8f;border-radius:1px;"></div>
<div class="r" style="left:1171px;top:935px;width:300px;height:16px;background:#f8f8f8;border-radius:8px;"></div>
<div class="r" style="left:1188px;top:939px;width:300px;height:9px;background:#717171;border-radius:5px;"></div>
<svg width="1408" height="958"><polygon points="1175.8,943.5 1182.8,938.9 1182.8,948.1" fill="#6a6a6a"/></svg>
</body></html>
